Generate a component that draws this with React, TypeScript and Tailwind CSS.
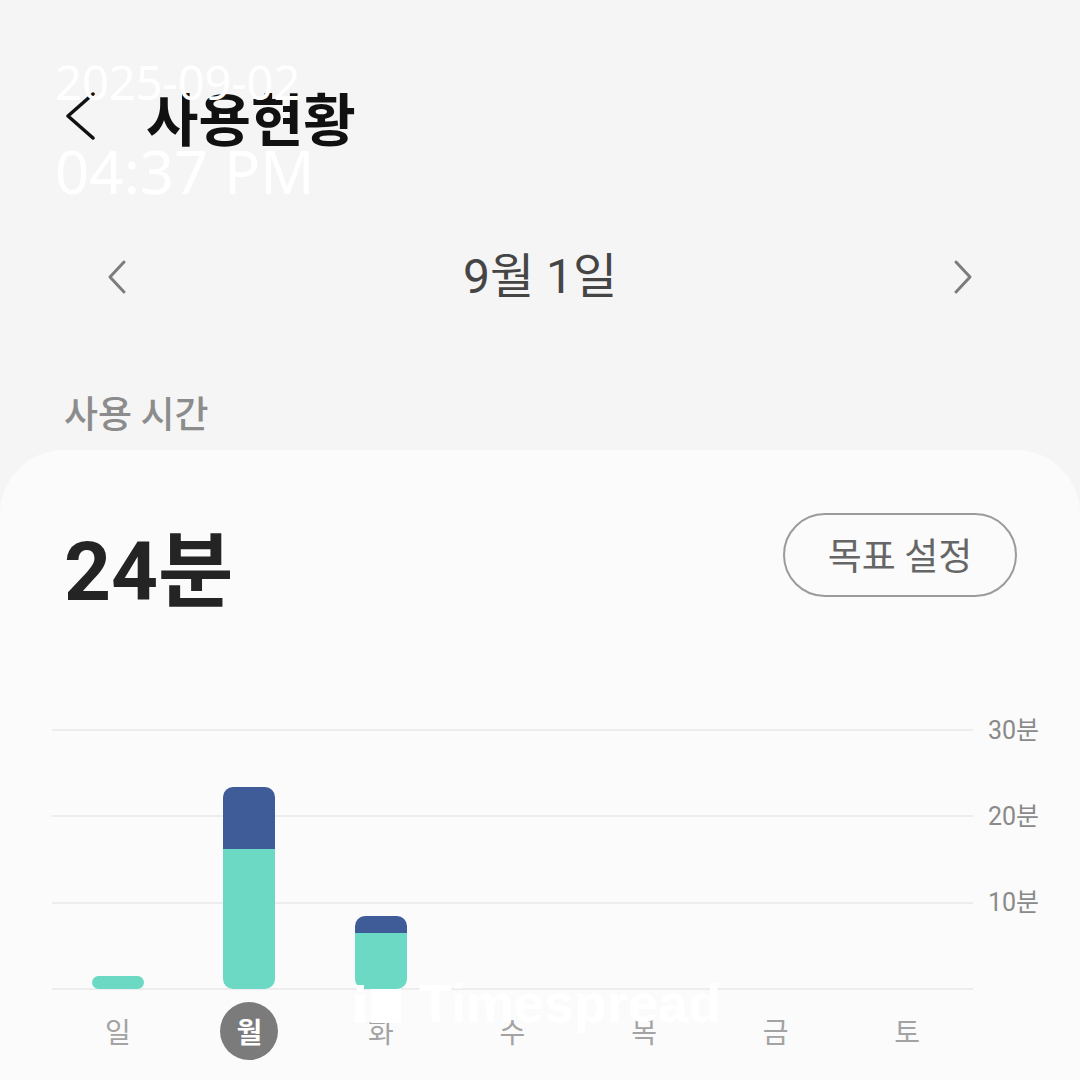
import React from "react";

const days = [
  { label: "일", teal: 13, navy: 0 },
  { label: "월", teal: 140, navy: 62, active: true },
  { label: "화", teal: 56, navy: 17 },
  { label: "수", teal: 0, navy: 0 },
  { label: "목", teal: 0, navy: 0 },
  { label: "금", teal: 0, navy: 0 },
  { label: "토", teal: 0, navy: 0 },
];

const axis = ["30분", "20분", "10분", ""];

function Chevron({ dir, className }: { dir: "left" | "right"; className?: string }) {
  return (
    <svg viewBox="0 0 22 36" className={className} fill="none">
      <polyline
        points={dir === "left" ? "18,3 4,18 18,33" : "4,3 18,18 4,33"}
        stroke="currentColor"
        strokeWidth="3"
        strokeLinecap="round"
        strokeLinejoin="round"
      />
    </svg>
  );
}

export default function App() {
  return (
    <div className="relative flex h-[1080px] w-[1080px] flex-col overflow-hidden bg-[#f5f5f5] font-['Roboto','Noto_Sans_CJK_KR',sans-serif]">
      {/* top bar */}
      <div className="flex h-[152px] items-center pl-[66px] pt-[80px]">
        <svg viewBox="0 0 30 50" className="h-[50px] w-[30px] text-[#111]" fill="none">
          <polyline points="27,3 2,25 27,47" stroke="currentColor" strokeWidth="3.5" strokeLinecap="round" strokeLinejoin="round" />
        </svg>
        <h1 className="ml-[50px] font-['Noto_Sans_CJK_KR',sans-serif] text-[57px] font-bold leading-none text-[#111]">사용현황</h1>
      </div>

      {/* date switcher */}
      <div className="mt-[75px] flex h-[100px] items-center justify-between px-[106px]">
        <Chevron dir="left" className="h-[36px] w-[22px] text-[#7c7c7c]" />
        <span className="text-[48px] leading-none text-[#454545]">9월 1일</span>
        <Chevron dir="right" className="h-[36px] w-[22px] text-[#7c7c7c]" />
      </div>

      <div className="mt-[50px] h-[70px] pl-[64px] font-['Noto_Sans_CJK_KR',sans-serif] text-[37px] font-medium leading-[70px] text-[#8c8c8c]">
        사용 시간
      </div>

      {/* card */}
      <div className="mt-[3px] flex flex-1 flex-col rounded-t-[64px] bg-[#fbfbfb]">
        <div className="box-content flex h-[84px] items-start justify-between pl-[64px] pr-[63px] pt-[63px]">
          <span className="mt-[19px] text-[82px] font-bold leading-[80px] text-[#242424]">24분</span>
          <button className="flex h-[84px] w-[234px] items-center justify-center rounded-full border-2 border-[#9b9b9b] font-['Noto_Sans_CJK_KR',sans-serif] text-[37px] text-[#666]">
            목표 설정
          </button>
        </div>

        {/* chart */}
        <div className="ml-[52px] mt-[132px] flex">
          <div className="grid w-[921px]">
            <div className="col-start-1 row-start-1 flex h-[261px] flex-col justify-between">
              {axis.map((_, i) => (
                <div key={i} className="h-[2px] bg-[#ededed]" />
              ))}
            </div>
            <div className="col-start-1 row-start-1 grid h-[260px] grid-cols-7 items-end">
              {days.map((d) => (
                <div key={d.label} className="flex justify-center">
                  {d.teal + d.navy > 0 && (
                    <div className="flex w-[52px] flex-col overflow-hidden rounded-[10px]">
                      {d.navy > 0 && <div className="bg-[#3f5b98]" style={{ height: d.navy }} />}
                      <div className="bg-[#6bd9c4]" style={{ height: d.teal }} />
                    </div>
                  )}
                </div>
              ))}
            </div>
          </div>
          <div className="ml-[15px] flex h-[261px] flex-col justify-between">
            {axis.map((a, i) => (
              <div key={i} className="flex h-[2px] items-center">
                <span className="text-[25px] leading-none text-[#8a8a8a]">{a}</span>
              </div>
            ))}
          </div>
        </div>

        <div className="ml-[52px] mt-[12px] grid w-[921px] grid-cols-7">
          {days.map((d) => (
            <div key={d.label} className="flex h-[58px] items-center justify-center">
              {d.active ? (
                <span className="flex h-[58px] w-[58px] items-center justify-center rounded-full bg-[#7b7b7b] font-['Noto_Sans_CJK_KR',sans-serif] text-[28px] font-bold text-white">
                  {d.label}
                </span>
              ) : (
                <span className="font-['Noto_Sans_CJK_KR',sans-serif] text-[28px] text-[#a3a3a3]">{d.label}</span>
              )}
            </div>
          ))}
        </div>
      </div>

      {/* capture timestamp */}
      <div className="absolute left-[55px] top-[59px] flex flex-col font-['Noto_Sans',sans-serif] text-white">
        <span className="text-[47px] leading-[47px]">2025-09-02</span>
        <span className="mt-[35px] text-[60px] leading-[60px]">04:37 PM</span>
      </div>

      {/* watermark */}
      <div className="absolute left-[355px] top-[976px] flex items-center gap-[18px] text-white">
        <svg viewBox="0 0 46 40" className="h-[40px] w-[46px]" fill="white">
          <rect x="0" y="12" width="10" height="28" />
          <rect x="2" y="2" width="7" height="7" />
          <rect x="16" y="6" width="30" height="34" />
        </svg>
        <span className="font-['Liberation_Sans',sans-serif] text-[54px] font-bold leading-none">Timespread</span>
      </div>
    </div>
  );
}
